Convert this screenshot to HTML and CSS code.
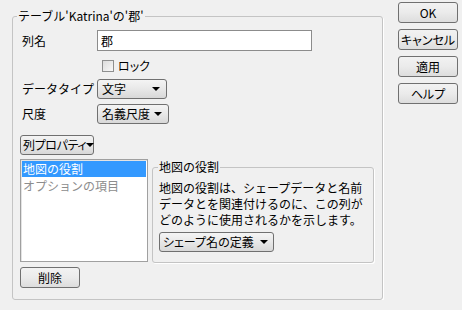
FILE: index.html
```html
<!DOCTYPE html>
<html lang="ja">

<head>
  <meta charset="UTF-8">
  <title>列情報</title>
  <link rel="stylesheet" href="styles.css">
</head>

<body>
  <div class="dialog">
    <fieldset class="column-box">
      <legend>テーブル'Katrina'の'郡'</legend>

      <div class="row name-row">
        <label class="row-label" for="colName">列名</label>
        <input class="text-input" type="text" id="colName" value="郡">
      </div>

      <div class="row check-row">
        <span class="check-box"></span>
        <span class="narrow">ロック</span>
      </div>

      <div class="row type-row">
        <span class="row-label">データタイプ</span>
        <div class="combo combo-type"><span>文字</span><i class="arrow"></i></div>
      </div>

      <div class="row scale-row">
        <span class="row-label">尺度</span>
        <div class="combo combo-scale"><span>名義尺度</span><i class="arrow"></i></div>
      </div>

      <div class="combo combo-props"><span>列プロパティ</span><i class="arrow"></i></div>

      <div class="prop-area">
        <ul class="prop-list">
          <li class="selected">地図の役割</li>
          <li class="disabled">オプションの項目</li>
        </ul>
        <fieldset class="role-box">
          <legend>地図の役割</legend>
          <p class="role-text">地図の役割は、シェープデータと名前<br>データとを関連付けるのに、この列が<br>どのように使用されるかを示します。</p>
          <div class="combo combo-shape"><span>シェープ名の定義</span><i class="arrow"></i></div>
        </fieldset>
      </div>

      <button class="btn btn-delete" type="button">削除</button>
    </fieldset>

    <div class="actions">
      <button class="btn" type="button">OK</button>
      <button class="btn" type="button">キャンセル</button>
      <button class="btn" type="button">適用</button>
      <button class="btn" type="button">ヘルプ</button>
    </div>
  </div>
</body>

</html>
```

FILE: styles.css
```css
body {
  margin: 0;
  background-color: #f0f0f0;
  font-family: "Noto Sans CJK JP", "Noto Sans", sans-serif;
  font-size: 12px;
  line-height: 16px;
  color: #000;
}

.narrow {
  font-feature-settings: "palt";
}

.dialog {
  display: flex;
  align-items: flex-start;
  padding-left: 12px;
}

fieldset {
  margin: 0;
  border: 1px solid #c4c4c4;
  border-radius: 3px;
  box-shadow: 1px 1px 0 #fff;
  box-sizing: border-box;
}

legend {
  padding: 0 1px;
  line-height: 16px;
}

.column-box {
  width: 370px;
  flex-shrink: 0;
  margin-top: 8px;
  padding: 6px 8px 11px 7px;
}

.column-box > legend {
  margin-left: -3px;
}

.row {
  display: flex;
  align-items: center;
}

.row-label {
  width: 77px;
  flex-shrink: 0;
  padding-left: 2px;
  box-sizing: border-box;
}

.text-input {
  width: 215px;
  height: 21px;
  box-sizing: border-box;
  margin: 0;
  padding: 0 3px;
  border: 1px solid #8c8c8c;
  background: #fff;
  font: inherit;
  color: #000;
}

.check-row {
  margin-top: 8px;
  padding-left: 82px;
  height: 13px;
}

.check-box {
  width: 12px;
  height: 12px;
  box-sizing: border-box;
  border: 1px solid #8e8f8f;
  background: linear-gradient(135deg, #dcdcdc, #f8f8f8);
  margin-right: 4px;
}

.type-row {
  margin-top: 7px;
}

.scale-row {
  margin-top: 5px;
}

.combo {
  display: flex;
  align-items: center;
  justify-content: space-between;
  flex-shrink: 0;
  white-space: nowrap;
  height: 20px;
  box-sizing: border-box;
  padding: 0 6px 0 4px;
  border: 1px solid #707070;
  border-radius: 3px;
  background: linear-gradient(#f4f4f4, #e8e8e8 50%, #d8d8d8);
  font-feature-settings: "palt";
}

.arrow {
  width: 0;
  height: 0;
  border-left: 4px solid transparent;
  border-right: 4px solid transparent;
  border-top: 4px solid #000;
}

.combo-type {
  width: 70px;
}

.combo-scale {
  width: 72px;
}

.combo-props {
  width: 74px;
  margin-top: 11px;
  padding: 0 3px 0 2px;
  letter-spacing: -0.4px;
}

.prop-area {
  display: flex;
  align-items: flex-start;
  gap: 4px;
  margin-top: 4px;
}

.prop-list {
  list-style: none;
  margin: 0;
  padding: 1px;
  width: 128px;
  height: 103px;
  flex-shrink: 0;
  box-sizing: border-box;
  border: 1px solid #a0a0a0;
  box-shadow: inset 1px 1px 0 #e3e3e3;
  background: #fff;
}

.prop-list li {
  height: 16px;
  padding-left: 1px;
  white-space: nowrap;
}

.prop-list .selected {
  background: #3399ff;
  color: #fff;
}

.prop-list .disabled {
  margin-top: 1px;
  color: #8d8d8d;
}

.role-box {
  width: 222px;
  flex-shrink: 0;
  padding: 5px 4px 10px 6px;
}

.role-box > legend {
  margin-left: -1px;
}

.role-text {
  margin: 0;
  white-space: nowrap;
}

.combo-shape {
  width: 115px;
  margin-top: 4px;
  padding: 0 5px 0 3px;
}

.btn {
  width: 60px;
  height: 21px;
  margin: 0;
  padding: 0;
  white-space: nowrap;
  border: 1px solid #707070;
  border-radius: 3px;
  background: linear-gradient(#f2f2f2, #ebebeb 50%, #dddddd);
  font: inherit;
  font-feature-settings: "palt";
  color: #000;
}

.btn-delete {
  display: block;
  margin-top: 4px;
}

.actions {
  display: flex;
  flex-direction: column;
  gap: 6px;
  margin-left: 15px;
  padding-top: 2px;
}
```
